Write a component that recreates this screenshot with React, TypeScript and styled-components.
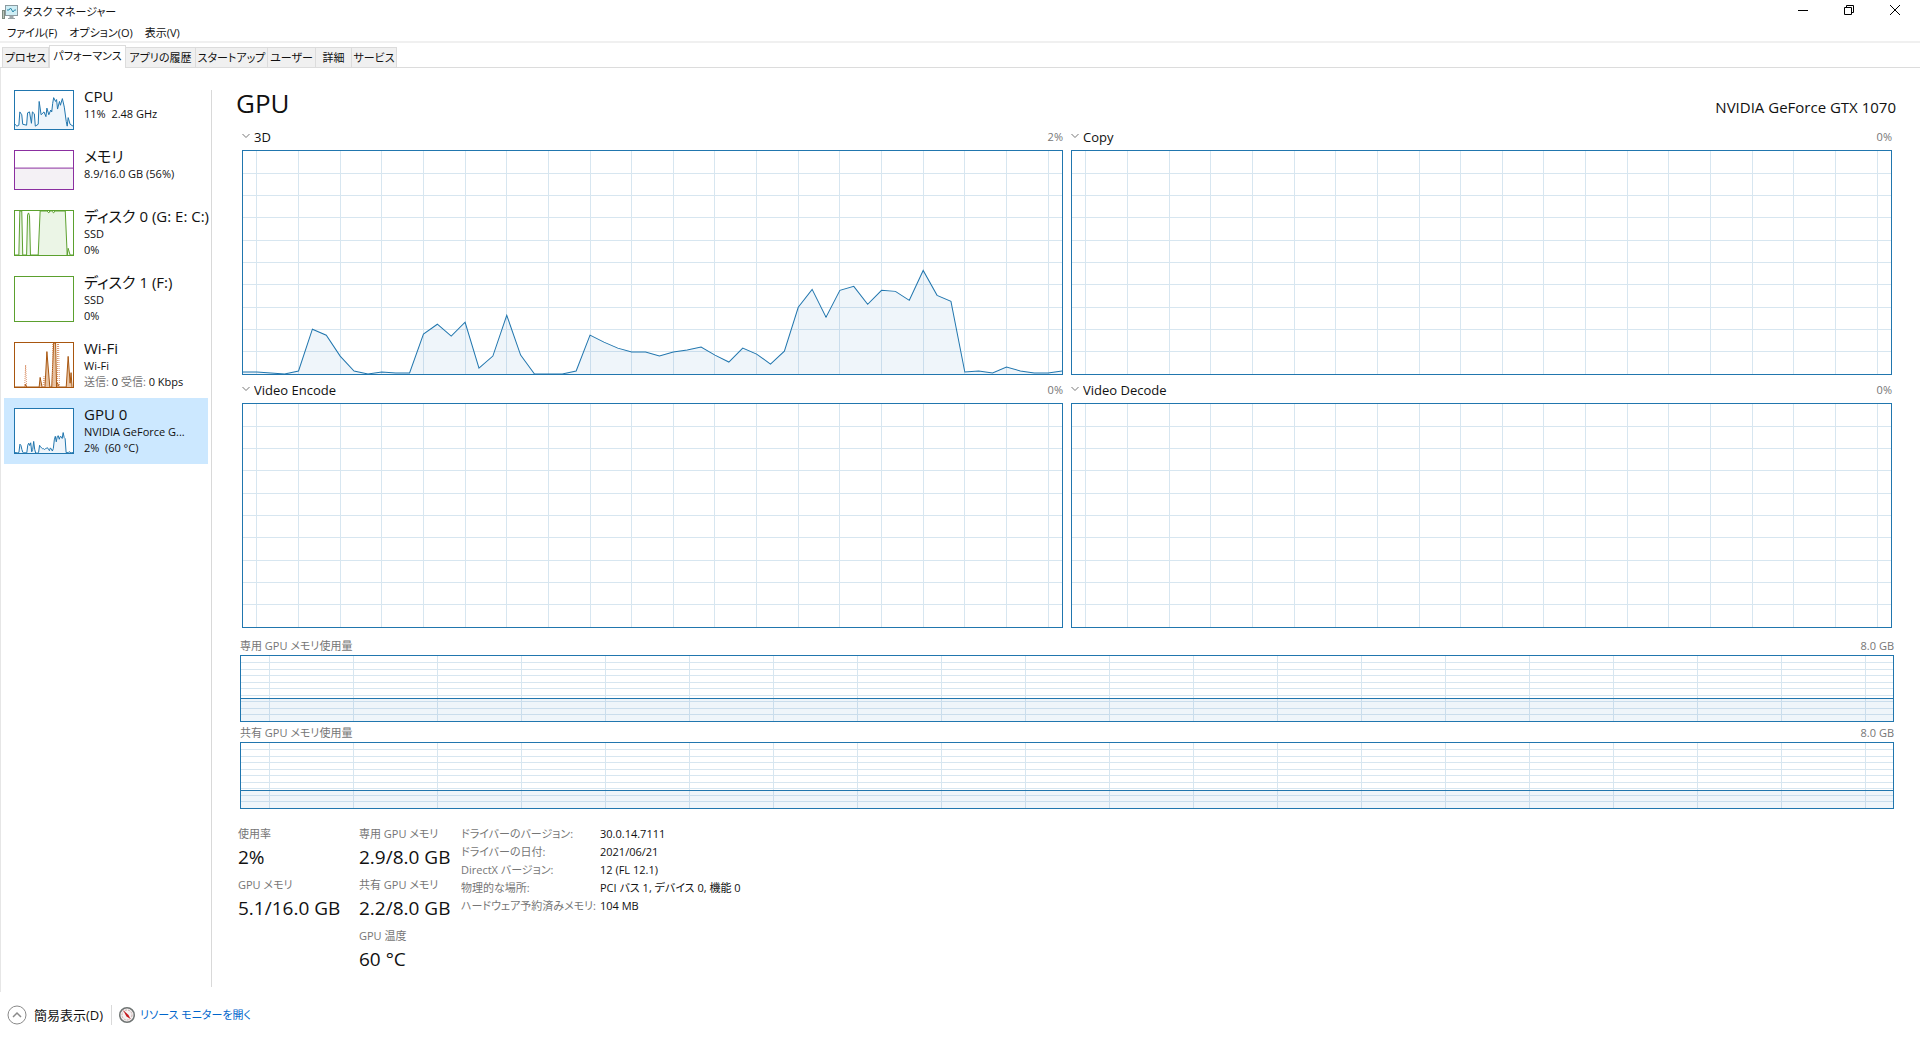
import React, { useState } from "react";
import styled, { createGlobalStyle } from "styled-components";

const sans = `"Open Sans", "Noto Sans CJK JP", sans-serif`;
const blue = "#2176ae";
const muted = "#767676";

const GlobalStyle = createGlobalStyle`
  *, *::before, *::after { box-sizing: border-box; }
  body {
    margin: 0;
    background: #fff;
    color: #111;
    font-family: ${sans};
    font-feature-settings: "palt";
    font-size: 11px;
    line-height: 16px;
  }
  button, select { font: inherit; font-feature-settings: inherit; color: inherit; }
`;

const Window = styled.div`
  display: flex;
  flex-direction: column;
  min-height: 100vh;
`;

const PlainButton = styled.button`
  padding: 0;
  border: 0;
  background: none;
  white-space: nowrap;
`;

/* ---------- title bar, menu, tabs ---------- */

const TitleBar = styled.header`
  display: flex;
  align-items: center;
  height: 24px;
  padding: 0 2px;
  gap: 5px;
`;

const Title = styled.h1`
  flex: 1;
  margin: 0;
  font-size: 11px;
  font-weight: 400;
  line-height: 16px;
`;

const WindowButtons = styled.div`
  display: flex;
  align-self: flex-start;
`;

const WindowButton = styled(PlainButton)`
  display: grid;
  place-items: center;
  width: 46px;
  height: 20px;
`;

const MenuBar = styled.nav`
  display: flex;
  gap: 12px;
  height: 19px;
  padding: 0 7px;
  border-bottom: 2px solid #f0f0f0;
`;

const MenuButton = styled(PlainButton)`
  line-height: 18px;
`;

const TabList = styled.div`
  display: flex;
  align-items: flex-end;
  height: 25px;
  padding-left: 2px;
  border-bottom: 1px solid #dcdcdc;
`;

const Tab = styled(PlainButton)<{ $width: number; $active: boolean }>`
  width: ${(p) => p.$width}px;
  height: ${(p) => (p.$active ? 23 : 20)}px;
  margin-bottom: ${(p) => (p.$active ? -1 : 0)}px;
  padding-bottom: ${(p) => (p.$active ? 3 : 0)}px;
  border: 1px solid #dcdcdc;
  border-bottom: 0;
  border-left-width: ${(p) => (p.$active ? 1 : 0)}px;
  background: ${(p) => (p.$active ? "#fff" : "#f0f0f0")};
  display: flex;
  align-items: center;
  justify-content: center;

  &:first-child {
    border-left-width: 1px;
  }
`;

/* ---------- sidebar ---------- */

const Body = styled.div`
  display: flex;
  flex: 1;
  border-left: 1px solid #e6e6e6;
`;

const Sidebar = styled.aside`
  flex: none;
  width: 210px;
  padding: 12px 3px 0;
`;

const DeviceButton = styled(PlainButton)<{ $selected: boolean }>`
  display: flex;
  align-items: flex-start;
  gap: 10px;
  width: 100%;
  padding: 6px 0 8px 10px;
  background: ${(p) => (p.$selected ? "#cce8ff" : "transparent")};
  text-align: left;
`;

const Thumb = styled.svg<{ $tint: string; $height: number }>`
  flex: none;
  width: 60px;
  height: ${(p) => p.$height}px;
  margin: 4px 0 2px;
  border: 1px solid ${(p) => p.$tint};
  background: #fff;
`;

const DeviceText = styled.span`
  display: flex;
  flex-direction: column;
`;

const DeviceName = styled.span`
  font-size: 15px;
  line-height: 20px;
`;

const Muted = styled.span`
  color: ${muted};
`;

const Divider = styled.div`
  flex: none;
  width: 1px;
  margin: 22px 0 5px;
  background: #d9d9d9;
`;

/* ---------- main panel ---------- */

const Main = styled.main`
  flex: 1;
  min-width: 0;
  padding: 16px 24px 0;
`;

const Heading = styled.div`
  display: flex;
  align-items: baseline;
  justify-content: space-between;
  height: 38px;
`;

const DeviceHeading = styled.h2`
  margin: 0;
  font-size: 26px;
  font-weight: 400;
  line-height: 38px;
`;

const Model = styled.span`
  font-size: 15px;
  line-height: 20px;
`;

const EngineGrid = styled.div`
  display: grid;
  grid-template-columns: 1fr 1fr;
  column-gap: 8px;
  padding: 0 4px 0 6px;
`;

const EngineLabel = styled.div`
  display: flex;
  align-items: center;
  gap: 4px;
  height: 28px;
  padding-top: 2px;
`;

const EngineSelect = styled.select`
  appearance: none;
  flex: 1;
  padding: 0;
  border: 0;
  background: none;
  font-size: 13px;
  line-height: 16px;
`;

const Plot = styled.svg<{ $height: number }>`
  display: block;
  width: 100%;
  height: ${(p) => p.$height}px;
  border: 1px solid ${blue};
`;

const MemoryLabel = styled.div`
  display: flex;
  align-items: flex-end;
  justify-content: space-between;
  height: 20px;
  padding-bottom: 1px;
  color: ${muted};
`;

const MemorySection = styled.section`
  padding: 7px 2px 0 4px;
`;

/* ---------- figures under the charts ---------- */

const Details = styled.div`
  display: flex;
  padding: 16px 0 0 2px;
`;

const StatColumn = styled.dl<{ $width: number }>`
  flex: none;
  width: ${(p) => p.$width}px;
  margin: 0;
`;

const StatLabel = styled.dt`
  height: 18px;
  color: ${muted};
  line-height: 18px;
`;

const StatValue = styled.dd`
  height: 33px;
  margin: 0;
  font-size: 19px;
  line-height: 28px;
`;

const InfoTable = styled.table`
  align-self: flex-start;
  border-collapse: collapse;
  line-height: 18px;
  white-space: nowrap;

  th {
    width: 139px;
    padding: 0;
    color: ${muted};
    font-weight: 400;
    text-align: left;
  }

  td {
    padding: 0;
  }
`;

/* ---------- footer ---------- */

const Footer = styled.footer`
  display: flex;
  align-items: center;
  height: 48px;
  padding: 0 0 2px 7px;
`;

const FewerButton = styled(PlainButton)`
  display: flex;
  align-items: center;
  gap: 7px;
  padding-right: 8px;
  border-right: 1px solid #d9d9d9;
  font-size: 13px;
`;

const MonitorLink = styled.a`
  display: flex;
  align-items: center;
  gap: 5px;
  padding-left: 7px;
  color: #0066cc;
  text-decoration: none;
`;

/* ---------- data ---------- */

const usage3D = [
  2, 2, 1, 0, 3, 45, 39, 18, 3, 0, 2, 1, 1, 40, 50, 38, 52, 6, 18, 59, 19, 0, 0, 0, 3, 39, 32, 26, 22, 22, 18, 22, 24,
  27, 19, 12, 26, 20, 10, 23, 67, 85, 57, 84, 88, 70, 84, 83, 74, 104, 79, 73, 2, 3, 1, 7, 3, 1, 1, 3,
].map((v) => v / 2.24);

const tabs: [string, number][] = [
  ["プロセス", 47],
  ["パフォーマンス", 77],
  ["アプリの履歴", 70],
  ["スタートアップ", 72],
  ["ユーザー", 48],
  ["詳細", 36],
  ["サービス", 45],
];

const engines = ["3D", "Copy", "Video Encode", "Video Decode"];

const info = [
  ["ドライバーのバージョン:", "30.0.14.7111"],
  ["ドライバーの日付:", "2021/06/21"],
  ["DirectX バージョン:", "12 (FL 12.1)"],
  ["物理的な場所:", "PCI バス 1, デバイス 0, 機能 0"],
  ["ハードウェア予約済みメモリ:", "104 MB"],
];

const usagePoints = usage3D.map((v, i) => `${i},${100 - v}`).join(" ");

interface Device {
  name: string;
  lines: React.ReactNode[];
  tint: string;
  fill: string;
  height: number;
  viewBox: string;
  points?: string;
  dotted?: string;
}

const devices: Device[] = [
  {
    name: "CPU",
    lines: ["11%\u00a0 2.48 GHz"],
    tint: blue,
    fill: "#eef5fb",
    height: 40,
    viewBox: "0 0 60 40",
    points:
      "0,35 2,37 4,36 5,22 7,25 8,35 12,36 13,23 15,22 17,34 18,22 20,24 21,37 24,35 25,11 27,25 30,22 32,27 33,18 35,25 37,20 38,22 39,13 40,7 42,11 43,9 44,19 46,11 47,15 49,8 51,17 53,32 54,37 55,28 57,35 60,37",
  },
  {
    name: "メモリ",
    lines: ["8.9/16.0 GB (56%)"],
    tint: "#8b2fa0",
    fill: "#f4f1f5",
    height: 40,
    viewBox: "0 0 60 40",
    points: "-1,18 61,18",
  },
  {
    name: "ディスク 0 (G: E: C:)",
    lines: ["SSD", "0%"],
    tint: "#5ba02e",
    fill: "#ebf5e6",
    height: 46,
    viewBox: "0 0 60 46",
    points:
      "0,46 4,46 5,0 7,0 8,46 12,46 13,4 14,2 15,5 16,46 24,46 26,0 33,0 35,2 36,0 38,0 40,2 41,0 52,0 54,46 55,39 57,46 60,46",
  },
  {
    name: "ディスク 1 (F:)",
    lines: ["SSD", "0%"],
    tint: "#5ba02e",
    fill: "#ebf5e6",
    height: 46,
    viewBox: "0 0 60 46",
  },
  {
    name: "Wi-Fi",
    lines: [
      "Wi-Fi",
      <>
        <Muted>送信:</Muted> 0 <Muted>受信:</Muted> 0 Kbps
      </>,
    ],
    tint: "#a8560f",
    fill: "#e8c4a4",
    height: 46,
    viewBox: "0 0 60 46",
    points:
      "0,46 10,46 11,43 12,46 25,46 26,36 28,46 31,46 33,9 36,46 38,46 40,0 42,0 43,46 44,42 46,46 53,46 55,14 57,42 58,31 59,46",
    dotted: "M10,46 L11,23 L12,46 M29,46 L30,35 L31,46 M39,46 V0 M44,46 V0 M46,46 L45,0",
  },
  {
    name: "GPU 0",
    lines: ["NVIDIA GeForce G...", "2%\u2002(60 °C)"],
    tint: blue,
    fill: "#eef5fb",
    height: 46,
    viewBox: "0 0 59 100",
    points: usagePoints,
  },
];

/* ---------- components ---------- */

const verticals = Array.from({ length: 20 }, (_, i) => 1 + 3 * i);
const horizontals = Array.from({ length: 9 }, (_, i) => 10 + 10 * i);
const gridPath =
  verticals.map((x) => `M${x},0 V100`).join(" ") + " " + horizontals.map((y) => `M0,${y} H59`).join(" ");

interface HistoryProps {
  label: string;
  height: number;
  points?: string;
  flat?: boolean;
}

function History({ label, height, points, flat }: HistoryProps) {
  return (
    <Plot $height={height} viewBox="0 0 59 100" preserveAspectRatio="none" role="img" aria-label={label}>
      {points && <polygon points={`0,100 ${points} 59,100`} fill="#eff5fa" />}
      <path
        d={gridPath}
        stroke="#2176ae"
        strokeOpacity="0.18"
        fill="none"
        vectorEffect="non-scaling-stroke"
        shapeRendering="crispEdges"
      />
      {points && (
        <polyline
          points={points}
          fill="none"
          stroke={blue}
          vectorEffect="non-scaling-stroke"
          shapeRendering={flat ? "crispEdges" : "auto"}
        />
      )}
    </Plot>
  );
}

function DeviceThumb({ device }: { device: Device }) {
  const { tint, fill, height, viewBox, points, dotted } = device;
  const [, , w, h] = viewBox.split(" ");
  return (
    <Thumb $tint={tint} $height={height} viewBox={viewBox} preserveAspectRatio="none" aria-hidden="true">
      {points && <polygon points={`0,${h} ${points} ${w},${h}`} fill={fill} />}
      {points && <polyline points={points} fill="none" stroke={tint} vectorEffect="non-scaling-stroke" />}
      {dotted && (
        <path d={dotted} fill="none" stroke="#d9936a" strokeDasharray="1 1" vectorEffect="non-scaling-stroke" />
      )}
    </Thumb>
  );
}

function Engine({ initial, value, points }: { initial: string; value: string; points?: string }) {
  const [engine, setEngine] = useState(initial);
  const id = `engine-${initial.replace(" ", "-")}`;
  return (
    <section>
      <EngineLabel>
        <label htmlFor={id} aria-label="エンジン">
          <svg width="8" height="16" viewBox="0 0 8 16" display="block">
            <path d="M0.5,5 L4,8.5 L7.5,5" fill="none" stroke="#777" />
          </svg>
        </label>
        <EngineSelect id={id} value={engine} onChange={(e) => setEngine(e.target.value)}>
          {engines.map((name) => (
            <option key={name}>{name}</option>
          ))}
        </EngineSelect>
        <Muted>{value}</Muted>
      </EngineLabel>
      <History label={engine} height={225} points={points} />
    </section>
  );
}

function AppIcon() {
  return (
    <svg width="16" height="16" viewBox="0 0 16 16" aria-hidden="true">
      <rect x="0.5" y="6.5" width="2" height="8" fill="#b9c2b9" stroke="#7d8b80" />
      <rect x="3.5" y="1.5" width="12" height="10" fill="#cfeef5" stroke="#8b9aa0" />
      <path d="M5,6 H7 L8.500,4 L11,8 L12.500,6 H14" fill="none" stroke="#2a86a8" />
      <path d="M8,12 H11 V14 H8 Z M6,14.500 H13" fill="#a5adb0" stroke="#98a3a6" />
    </svg>
  );
}

export default function App() {
  const [activeTab, setActiveTab] = useState("パフォーマンス");
  const [selected, setSelected] = useState("GPU 0");

  return (
    <Window>
      <GlobalStyle />
      <TitleBar>
        <AppIcon />
        <Title>タスク マネージャー</Title>
        <WindowButtons>
          <WindowButton aria-label="最小化">
            <svg width="10" height="10" viewBox="0 0 10 10">
              <path d="M0,5.500 H10" stroke="#000" />
            </svg>
          </WindowButton>
          <WindowButton aria-label="元に戻す">
            <svg width="10" height="10" viewBox="0 0 10 10">
              <path d="M0.500,2.500 H7.500 V9.500 H0.500 Z M2.500,2.500 V0.500 H9.500 V7.500 H7.500" fill="none" stroke="#000" />
            </svg>
          </WindowButton>
          <WindowButton aria-label="閉じる">
            <svg width="10" height="10" viewBox="0 0 10 10">
              <path d="M0,0 L10,10 M10,0 L0,10" stroke="#000" />
            </svg>
          </WindowButton>
        </WindowButtons>
      </TitleBar>

      <MenuBar>
        <MenuButton>ファイル(F)</MenuButton>
        <MenuButton>オプション(O)</MenuButton>
        <MenuButton>表示(V)</MenuButton>
      </MenuBar>

      <TabList role="tablist">
        {tabs.map(([name, width]) => (
          <Tab
            key={name}
            role="tab"
            aria-selected={name === activeTab}
            $width={width}
            $active={name === activeTab}
            onClick={() => setActiveTab(name)}
          >
            {name}
          </Tab>
        ))}
      </TabList>

      <Body>
        <Sidebar>
          {devices.map((device) => (
            <DeviceButton
              key={device.name}
              $selected={device.name === selected}
              aria-pressed={device.name === selected}
              onClick={() => setSelected(device.name)}
            >
              <DeviceThumb device={device} />
              <DeviceText>
                <DeviceName>{device.name}</DeviceName>
                {device.lines.map((line, i) => (
                  <span key={i}>{line}</span>
                ))}
              </DeviceText>
            </DeviceButton>
          ))}
        </Sidebar>
        <Divider />
        <Main>
          <Heading>
            <DeviceHeading>GPU</DeviceHeading>
            <Model>NVIDIA GeForce GTX 1070</Model>
          </Heading>

          <EngineGrid>
            <Engine initial="3D" value="2%" points={usagePoints} />
            <Engine initial="Copy" value="0%" />
            <Engine initial="Video Encode" value="0%" />
            <Engine initial="Video Decode" value="0%" />
          </EngineGrid>

          <MemorySection>
            <MemoryLabel>
              <span>専用 GPU メモリ使用量</span>
              <span>8.0 GB</span>
            </MemoryLabel>
            <History label="専用 GPU メモリ使用量" height={67} points="0,65 59,65" flat />
            <MemoryLabel>
              <span>共有 GPU メモリ使用量</span>
              <span>8.0 GB</span>
            </MemoryLabel>
            <History label="共有 GPU メモリ使用量" height={67} points="0,73 59,73" flat />
          </MemorySection>

          <Details>
            <StatColumn $width={121}>
              <StatLabel>使用率</StatLabel>
              <StatValue>2%</StatValue>
              <StatLabel>GPU メモリ</StatLabel>
              <StatValue>5.1/16.0 GB</StatValue>
            </StatColumn>
            <StatColumn $width={102}>
              <StatLabel>専用 GPU メモリ</StatLabel>
              <StatValue>2.9/8.0 GB</StatValue>
              <StatLabel>共有 GPU メモリ</StatLabel>
              <StatValue>2.2/8.0 GB</StatValue>
              <StatLabel>GPU 温度</StatLabel>
              <StatValue>60 °C</StatValue>
            </StatColumn>
            <InfoTable>
              <tbody>
                {info.map(([label, value]) => (
                  <tr key={label}>
                    <th scope="row">{label}</th>
                    <td>{value}</td>
                  </tr>
                ))}
              </tbody>
            </InfoTable>
          </Details>
        </Main>
      </Body>

      <Footer>
        <FewerButton>
          <svg width="20" height="20" viewBox="0 0 20 20" aria-hidden="true">
            <circle cx="10" cy="10" r="9" fill="none" stroke="#8a8a8a" />
            <path d="M6,12 L10,8 L14,12" fill="none" stroke="#8a8a8a" strokeWidth="1.500" />
          </svg>
          簡易表示(D)
        </FewerButton>
        <MonitorLink href="#resource-monitor">
          <svg width="16" height="16" viewBox="0 0 16 16" aria-hidden="true">
            <circle cx="8" cy="8" r="7.250" fill="#f4f1f1" stroke="#6f7473" strokeWidth="1.500" />
            <circle cx="8" cy="8" r="5" fill="none" stroke="#c9a9a9" strokeDasharray="2 1" />
            <path d="M4,3 L9.500,8 L11.500,12 L7.500,9.500 Z" fill="#c4161c" />
          </svg>
          リソース モニターを開く
        </MonitorLink>
      </Footer>
    </Window>
  );
}
